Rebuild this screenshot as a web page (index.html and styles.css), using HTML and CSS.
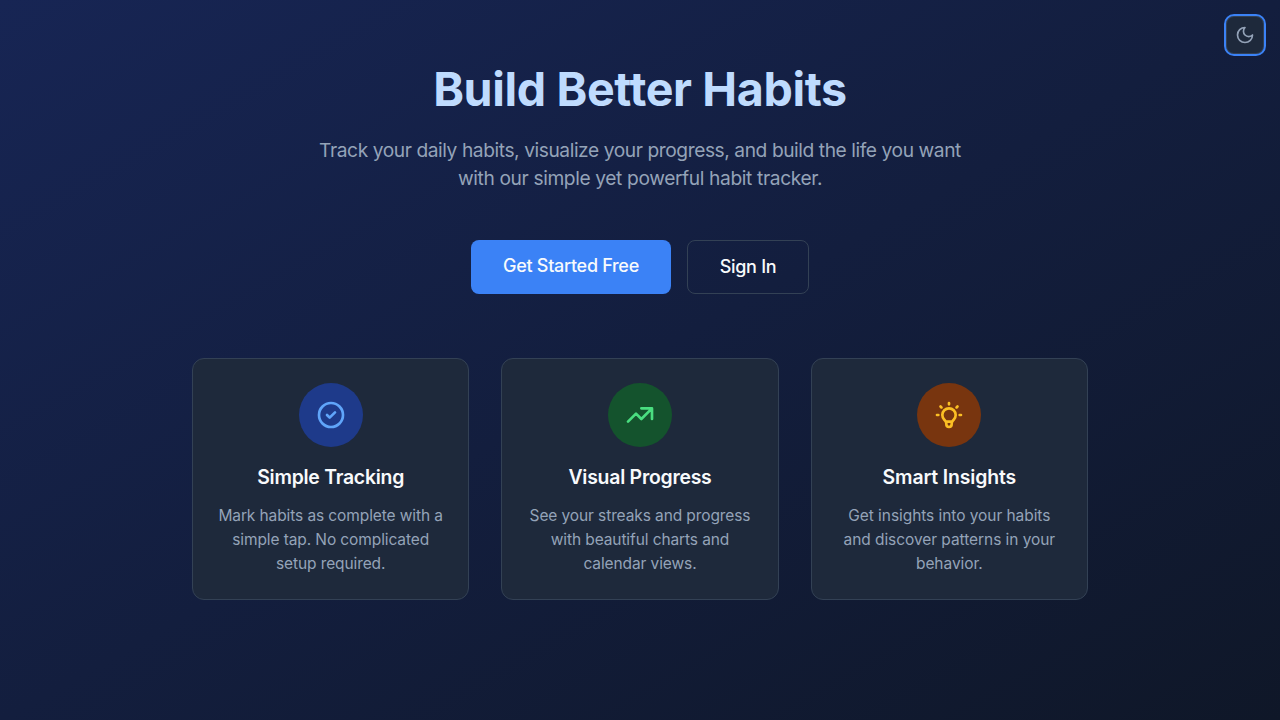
FILE: index.html
```html
<!DOCTYPE html>
<html lang="en">
<head>
<meta charset="utf-8">
<title>Build Better Habits</title>
<link rel="stylesheet" href="styles.css">
</head>
<body>
<button class="theme-toggle" aria-label="Toggle theme">
<svg width="20" height="20" viewBox="0 0 24 24"><path d="M12 3a6 6 0 0 0 9 9 9 9 0 1 1-9-9Z"/></svg>
</button>
<main class="page">
<header class="hero">
<h1 class="title">Build Better Habits</h1>
<p class="lead">Track your daily habits, visualize your progress, and build the life you want<br><span class="lead-end">with our simple yet powerful habit tracker.</span></p>
<div class="actions">
<a class="btn primary">Get Started Free</a>
<a class="btn outline">Sign In</a>
</div>
</header>
<section class="cards">
<article class="card tracking">
<div class="icon blue"><svg width="32" height="32" viewBox="0 0 24 24"><path d="M9 12l2 2 4-4m6 2a9 9 0 11-18 0 9 9 0 0118 0z"/></svg></div>
<h3>Simple Tracking</h3>
<p>Mark habits as complete with a<br>simple tap. No complicated<br>setup required.</p>
</article>
<article class="card progress">
<div class="icon green"><svg width="32" height="32" viewBox="0 0 24 24"><path d="M13 7h8m0 0v8m0-8l-8 8-4-4-6 6"/></svg></div>
<h3>Visual Progress</h3>
<p>See your streaks and progress<br>with beautiful charts and<br>calendar views.</p>
</article>
<article class="card insights">
<div class="icon amber"><svg width="32" height="32" viewBox="0 0 24 24"><path d="M9.663 17h4.673M12 3v1m6.364 1.636l-.707.707M21 12h-1M4 12H3m3.343-5.657l-.707-.707m2.828 9.9a5 5 0 117.072 0l-.548.547A3.374 3.374 0 0014 18.469V19a2 2 0 11-4 0v-.531c0-.895-.356-1.754-.988-2.386l-.548-.547z"/></svg></div>
<h3>Smart Insights</h3>
<p>Get insights into your habits<br>and discover patterns in your<br>behavior.</p>
</article>
</section>
</main>
</body>
</html>
```
FILE: styles.css
```css
* { box-sizing: border-box; margin: 0; padding: 0; }
body {
  min-height: 720px;
  font-family: Inter, "Liberation Sans", sans-serif;
  color: #f8fafc;
  background: linear-gradient(to bottom right, #172554, #0f1728);
}
svg { display: block; fill: none; stroke: currentColor; stroke-width: 2; stroke-linecap: round; stroke-linejoin: round; }
.theme-toggle {
  position: absolute; top: 14px; right: 14px;
  width: 42px; height: 42px;
  display: flex; align-items: center; justify-content: center;
  border: 2px solid #3b82f6; border-radius: 10px;
  background: #1e293b; box-shadow: inset 0 0 0 1px #334155;
  color: #94a3b8;
}
.page { width: 896px; margin: 0 auto; padding-top: 64px; }
.hero { text-align: center; }
.title { font-size: 46.6px; line-height: 48px; font-weight: 700; color: #bfdbfe; letter-spacing: -0.36px; padding-top: 1px; }
.lead { margin-top: 23px; font-size: 19.2px; line-height: 28px; color: #94a3b8; letter-spacing: -0.43px; white-space: nowrap; }
.lead-end { letter-spacing: -0.38px; }
.actions { display: flex; justify-content: center; gap: 16px; margin-top: 48px; }
.btn { height: 54px; display: flex; justify-content: center; padding-top: 12px; border-radius: 8px; font-size: 18px; line-height: 28px; font-weight: 500; letter-spacing: -0.3px; }
.primary { width: 200px; background: #3b82f6; }
.outline { width: 122px; border: 1px solid #334155; }
.cards { display: grid; grid-template-columns: repeat(3, 1fr); gap: 32px; margin-top: 64px; }
.card { height: 242px; padding: 24px 0; text-align: center; border: 1px solid #334155; border-radius: 12px; background: #1e293b; }
.icon { width: 64px; height: 64px; margin: 0 auto 16px; display: flex; align-items: center; justify-content: center; border-radius: 50%; }
.blue { background: #1e3a8a; color: #60a5fa; }
.green { background: #14532d; color: #4ade80; }
.amber { background: #78350f; color: #fbbf24; }
.card h3 { font-size: 19.4px; line-height: 28px; font-weight: 600; letter-spacing: -0.24px; }
.insights h3 { letter-spacing: -0.13px; }
.card p { margin-top: 13px; font-size: 15.5px; line-height: 24px; color: #94a3b8; letter-spacing: -0.1px; white-space: nowrap; }
.insights p { letter-spacing: -0.06px; }
```
